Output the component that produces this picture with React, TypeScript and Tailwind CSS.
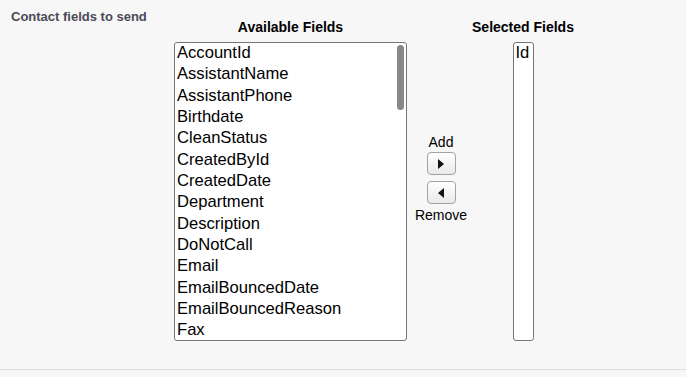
import React from "react";

const fields = [
  "AccountId",
  "AssistantName",
  "AssistantPhone",
  "Birthdate",
  "CleanStatus",
  "CreatedById",
  "CreatedDate",
  "Department",
  "Description",
  "DoNotCall",
  "Email",
  "EmailBouncedDate",
  "EmailBouncedReason",
  "Fax",
];

function ArrowButton({ dir }: { dir: "right" | "left" }) {
  return (
    <button
      type="button"
      className="flex h-[23px] w-[29px] items-center justify-center rounded-[4px] border border-[#a3a3a3] bg-linear-to-b from-white to-[#e9e9e9]"
    >
      <svg width="6" height="10" viewBox="0 0 6 10">
        {dir === "right" ? (
          <polygon points="0,0 6,5 0,10" fill="#111" />
        ) : (
          <polygon points="6,0 0,5 6,10" fill="#111" />
        )}
      </svg>
    </button>
  );
}

export default function App() {
  return (
    <div
      className="h-[377px] w-full bg-[#f7f7f7]"
      style={{ fontFamily: '"Liberation Sans", Arial, sans-serif' }}
    >
      <div className="flex h-[370px] border-b border-[#dcdcdc]">
        <div className="w-[174px] shrink-0 pl-[11px] pt-[10px] text-[13px] font-bold leading-[14px] text-[#4a4a56]">
          Contact fields to send
        </div>

        <div className="flex w-[233px] shrink-0 flex-col">
          <div className="mt-[19px] h-[16px] text-center text-[14px] font-bold leading-[16px] text-black">
            Available Fields
          </div>
          <div className="relative mt-[7px] h-[299px] overflow-hidden rounded-[3px] border border-[#767676] bg-white">
            {fields.map((f) => (
              <div
                key={f}
                className="h-[21.33px] whitespace-nowrap pl-[2px] text-[16.6px] leading-[19px] text-black"
              >
                {f}
              </div>
            ))}
            <div className="absolute right-[2px] top-[2px] h-[65px] w-[7px] rounded-full bg-[#888888]" />
          </div>
        </div>

        <div className="flex w-[63px] shrink-0 flex-col items-center pl-[5px] pt-[135px] text-[14px] leading-[14px] text-black">
          <div className="mb-[3px]">Add</div>
          <div>
            <ArrowButton dir="right" />
          </div>
          <div className="mt-[6px]">
            <ArrowButton dir="left" />
          </div>
          <div className="mt-[4px]">Remove</div>
        </div>

        <div className="flex w-[106px] shrink-0 flex-col items-center">
          <div className="mt-[19px] h-[16px] whitespace-nowrap text-center text-[14px] font-bold leading-[16px] text-black">
            Selected Fields
          </div>
          <div className="mt-[7px] h-[299px] w-[21px] overflow-hidden rounded-[3px] border border-[#767676] bg-white">
            <div className="h-[21.33px] pl-[2px] text-[16.6px] leading-[19px] text-black">
              Id
            </div>
          </div>
        </div>
      </div>
    </div>
  );
}
